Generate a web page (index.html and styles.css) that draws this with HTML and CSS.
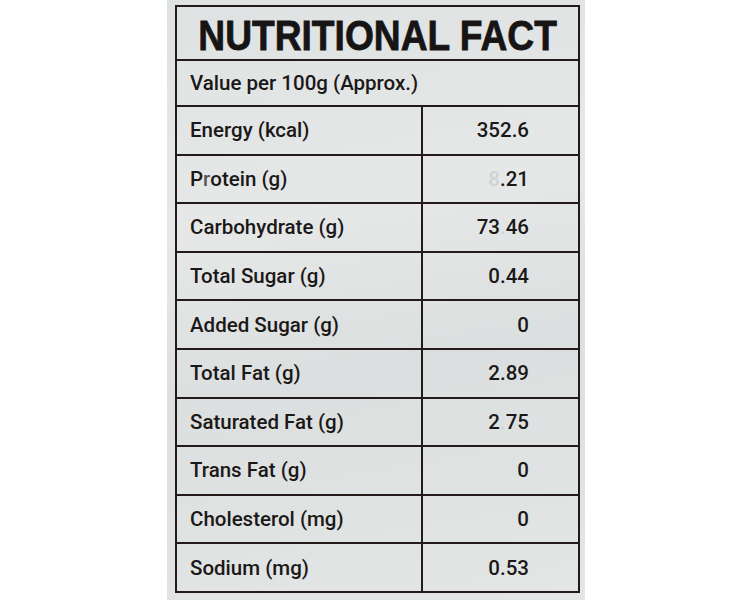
FILE: index.html
```html
<!DOCTYPE html>
<html>
<head>
<meta charset="utf-8">
<link rel="stylesheet" href="styles.css">
</head>
<body>
<div class="bag">
  <div class="label">
    <div class="title"><span class="title-text">NUTRITIONAL FACT</span></div>
    <div class="per">Value per 100g (Approx.)</div>
    <div class="row"><div class="name">Energy (kcal)</div><div class="val">352.6</div></div>
    <div class="row"><div class="name">P<span class="faint">r</span>otein (g)</div><div class="val"><span class="worn">8</span>.21</div></div>
    <div class="row"><div class="name">Carbohydrate (g)</div><div class="val">73<span class="worn">.</span>46</div></div>
    <div class="row"><div class="name">Total Sugar (g)</div><div class="val">0.44</div></div>
    <div class="row"><div class="name">Added Sugar (g)</div><div class="val">0</div></div>
    <div class="row"><div class="name">Total Fat (g)</div><div class="val">2.89</div></div>
    <div class="row"><div class="name">Saturated Fat (g)</div><div class="val">2<span class="worn">.</span>75</div></div>
    <div class="row"><div class="name">Trans Fat (g)</div><div class="val">0</div></div>
    <div class="row"><div class="name">Cholesterol (mg)</div><div class="val">0</div></div>
    <div class="row"><div class="name">Sodium (mg)</div><div class="val">0.53</div></div>
  </div>
</div>
</body>
</html>
```

FILE: styles.css
```css
html, body {
  margin: 0;
  padding: 0;
  background: #ffffff;
}
body {
  width: 752px;
  height: 600px;
  overflow: hidden;
}
.bag {
  margin-left: 167px;
  width: 418px;
  height: 600px;
  background: linear-gradient(170deg, #dfe2e2 0%, #e6e8e8 35%, #dcdfdf 60%, #e4e6e6 100%);
  padding-top: 5px;
  box-sizing: border-box;
}
.label {
  margin-left: 8px;
  width: 405px;
  box-sizing: border-box;
  border: 2px solid #241a1a;
  color: #1b1818;
  font-family: Roboto, "Liberation Sans", sans-serif;
  font-weight: 500;
  font-size: 20.5px;
}
.title {
  height: 54px;
  border-bottom: 2px solid #241a1a;
  display: flex;
  align-items: center;
  justify-content: center;
  padding-top: 5px;
  box-sizing: border-box;
  color: #161414;
}
.title-text {
  display: inline-block;
  white-space: nowrap;
  font-family: "Liberation Sans", Arial, sans-serif;
  font-weight: 700;
  font-size: 42px;
  -webkit-text-stroke: 0.8px #161414;
  transform: scaleX(0.885);
}
.per {
  height: 46px;
  border-bottom: 2px solid #241a1a;
  display: flex;
  align-items: center;
  padding-left: 13px;
  box-sizing: border-box;
}
.row {
  height: 48.6px;
  display: flex;
  border-bottom: 2px solid #241a1a;
  box-sizing: border-box;
}
.row:last-child {
  border-bottom: none;
  height: 47px;
}
.name {
  width: 246px;
  border-right: 2px solid #241a1a;
  display: flex;
  align-items: center;
  padding-left: 13px;
  box-sizing: border-box;
}
.val {
  flex: 1;
  display: flex;
  align-items: center;
  justify-content: flex-end;
  padding-right: 49px;
}
.worn {
  color: #cfd3d3;
}
.faint {
  color: #5a5656;
}
```
